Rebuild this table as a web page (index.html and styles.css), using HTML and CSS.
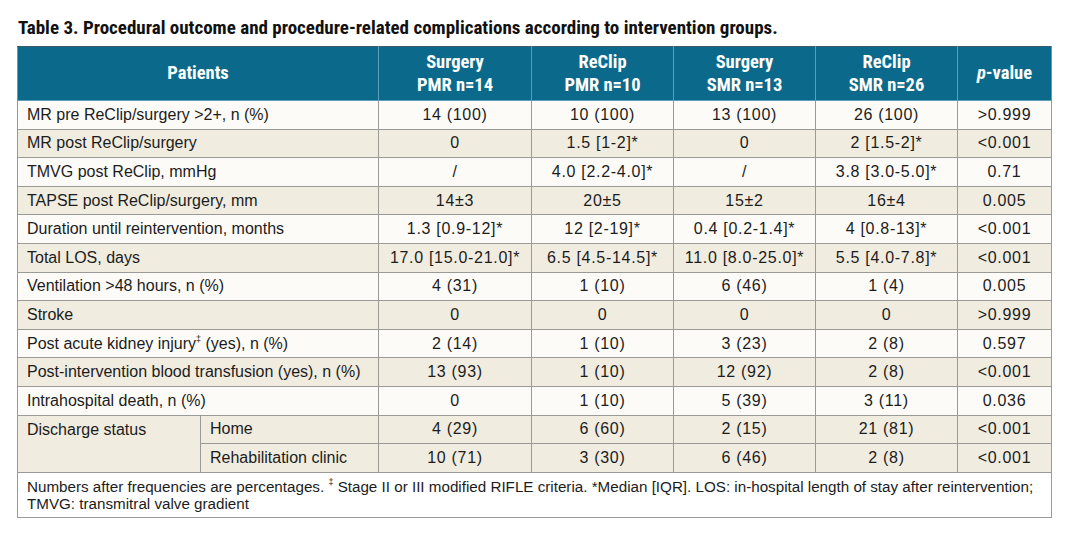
FILE: index.html
```html
<!DOCTYPE html>
<html>
<head>
<meta charset="utf-8">
<link rel="stylesheet" href="styles.css">
</head>
<body>
<h1 class="title">Table 3. Procedural outcome and procedure-related complications according to intervention groups.</h1>
<table class="tbl">
  <colgroup>
    <col class="c-a"><col class="c-b"><col class="c-2"><col class="c-3"><col class="c-4"><col class="c-5"><col class="c-6">
  </colgroup>
  <thead>
    <tr>
      <th colspan="2">Patients</th>
      <th>Surgery<br>PMR n=14</th>
      <th>ReClip<br>PMR n=10</th>
      <th>Surgery<br>SMR n=13</th>
      <th>ReClip<br>SMR n=26</th>
      <th><i>p</i>-value</th>
    </tr>
  </thead>
  <tbody>
    <tr class="odd"><td colspan="2" class="lbl">MR pre ReClip/surgery &gt;2+, n (%)</td><td>14 (100)</td><td>10 (100)</td><td>13 (100)</td><td>26 (100)</td><td>&gt;0.999</td></tr>
    <tr class="even"><td colspan="2" class="lbl">MR post ReClip/surgery</td><td>0</td><td>1.5 [1-2]*</td><td>0</td><td>2 [1.5-2]*</td><td>&lt;0.001</td></tr>
    <tr class="odd"><td colspan="2" class="lbl">TMVG post ReClip, mmHg</td><td>/</td><td>4.0 [2.2-4.0]*</td><td>/</td><td>3.8 [3.0-5.0]*</td><td>0.71</td></tr>
    <tr class="even"><td colspan="2" class="lbl">TAPSE post ReClip/surgery, mm</td><td>14±3</td><td>20±5</td><td>15±2</td><td>16±4</td><td>0.005</td></tr>
    <tr class="odd"><td colspan="2" class="lbl">Duration until reintervention, months</td><td>1.3 [0.9-12]*</td><td>12 [2-19]*</td><td>0.4 [0.2-1.4]*</td><td>4 [0.8-13]*</td><td>&lt;0.001</td></tr>
    <tr class="even"><td colspan="2" class="lbl">Total LOS, days</td><td>17.0 [15.0-21.0]*</td><td>6.5 [4.5-14.5]*</td><td>11.0 [8.0-25.0]*</td><td>5.5 [4.0-7.8]*</td><td>&lt;0.001</td></tr>
    <tr class="odd"><td colspan="2" class="lbl">Ventilation &gt;48 hours, n (%)</td><td>4 (31)</td><td>1 (10)</td><td>6 (46)</td><td>1 (4)</td><td>0.005</td></tr>
    <tr class="even"><td colspan="2" class="lbl">Stroke</td><td>0</td><td>0</td><td>0</td><td>0</td><td>&gt;0.999</td></tr>
    <tr class="odd"><td colspan="2" class="lbl">Post acute kidney injury<sup>‡</sup> (yes), n (%)</td><td>2 (14)</td><td>1 (10)</td><td>3 (23)</td><td>2 (8)</td><td>0.597</td></tr>
    <tr class="even"><td colspan="2" class="lbl">Post-intervention blood transfusion (yes), n (%)</td><td>13 (93)</td><td>1 (10)</td><td>12 (92)</td><td>2 (8)</td><td>&lt;0.001</td></tr>
    <tr class="odd"><td colspan="2" class="lbl">Intrahospital death, n (%)</td><td>0</td><td>1 (10)</td><td>5 (39)</td><td>3 (11)</td><td>0.036</td></tr>
    <tr class="even"><td rowspan="2" class="lbl top">Discharge status</td><td class="lbl">Home</td><td>4 (29)</td><td>6 (60)</td><td>2 (15)</td><td>21 (81)</td><td>&lt;0.001</td></tr>
    <tr class="even"><td class="lbl">Rehabilitation clinic</td><td>10 (71)</td><td>3 (30)</td><td>6 (46)</td><td>2 (8)</td><td>&lt;0.001</td></tr>
  </tbody>
  <tfoot>
    <tr><td colspan="7" class="foot">Numbers after frequencies are percentages. <sup>‡</sup> Stage II or III modified RIFLE criteria. *Median [IQR]. LOS: in-hospital length of stay after reintervention;<br>TMVG: transmitral valve gradient</td></tr>
  </tfoot>
</table>
</body>
</html>
```
FILE: styles.css
```css
html, body {
  margin: 0;
  padding: 0;
  background: #ffffff;
}
body {
  font-family: "Liberation Sans", Arial, sans-serif;
  color: #1c1c1c;
}
.title {
  margin: 0;
  padding: 16px 0 0 18px;
  height: 30px;
  box-sizing: content-box;
  font-family: "Roboto Condensed", "Liberation Sans", sans-serif;
  font-weight: bold;
  font-size: 19px;
  line-height: 24px;
  color: #111111;
}
.tbl {
  margin-left: 17px;
  width: 1035px;
  border-collapse: collapse;
  table-layout: fixed;
  font-size: 16px;
}
.c-a { width: 183px; }
.c-b { width: 178px; }
.c-2 { width: 153px; }
.c-3 { width: 142px; }
.c-4 { width: 142px; }
.c-5 { width: 142px; }
.c-6 { width: 94px; }
.tbl th {
  background: #0b6a8b;
  color: #ffffff;
  font-family: "Roboto Condensed", "Liberation Sans", sans-serif;
  font-weight: bold;
  font-size: 18.5px;
  line-height: 22.5px;
  height: 53px;
  padding: 0;
  text-align: center;
  border: 1px solid #5a9ebb;
  border-top: 1px solid #3d5a66;
}
.tbl td {
  border: 1px solid #9a9a96;
  height: 27.6px;
  padding: 0 4px;
  text-align: center;
  line-height: 20px;
  letter-spacing: 0.7px;
}
.tbl td.lbl {
  text-align: left;
  padding-left: 9px;
  letter-spacing: 0;
}
.tbl td.top {
  vertical-align: top;
  padding-top: 4px;
}
.odd td { background: #fcfbf8; }
.even td { background: #f0ece0; }
sup {
  font-size: 9px;
  vertical-align: 7px;
  line-height: 0;
}
.tbl td.foot {
  text-align: left;
  padding: 5px 9px 0;
  height: 39px;
  vertical-align: top;
  background: #ffffff;
  font-size: 15.2px;
  line-height: 17px;
  letter-spacing: 0;
}
```
